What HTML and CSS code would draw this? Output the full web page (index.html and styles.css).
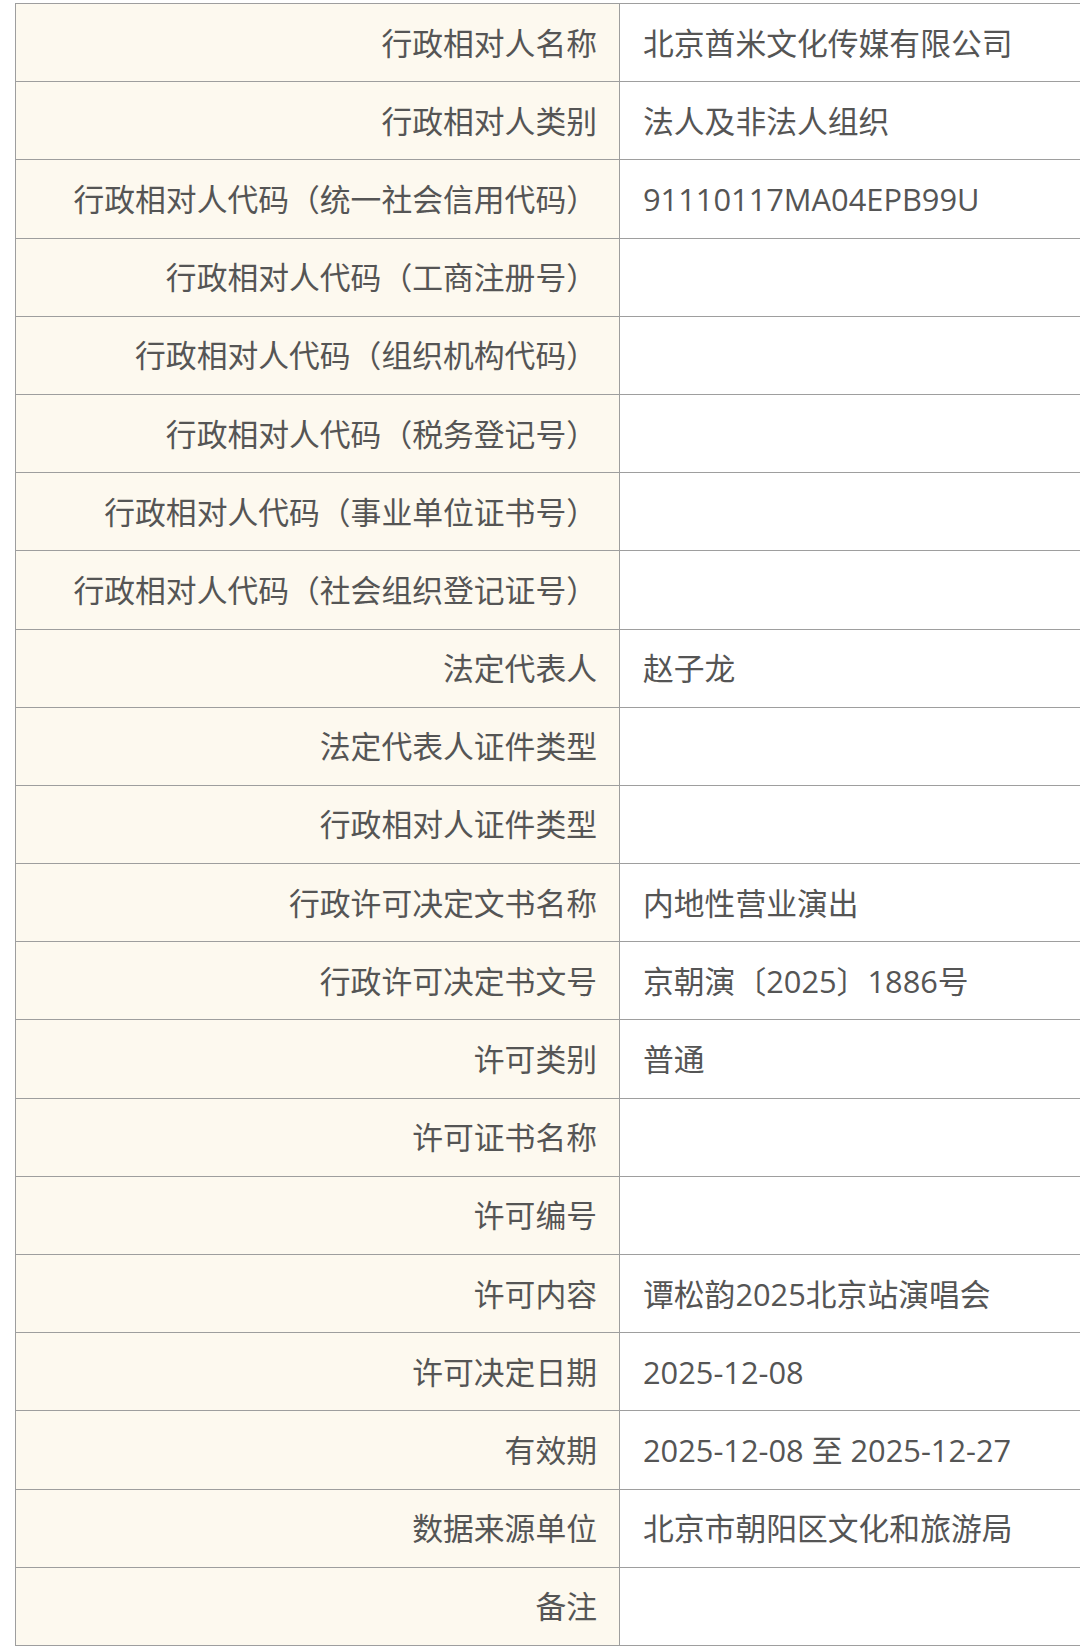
FILE: index.html
```html
<!DOCTYPE html>
<html lang="zh-CN">
<head>
<meta charset="utf-8">
<title>行政许可信息</title>
<link rel="stylesheet" href="styles.css">
</head>
<body>
<div class="wrap">
<table class="info">
<colgroup><col class="c-label"><col class="c-value"></colgroup>
<tbody>
<tr><th>行政相对人名称</th><td>北京酋米文化传媒有限公司</td></tr>
<tr><th>行政相对人类别</th><td>法人及非法人组织</td></tr>
<tr><th>行政相对人代码（统一社会信用代码）</th><td>91110117MA04EPB99U</td></tr>
<tr><th>行政相对人代码（工商注册号）</th><td></td></tr>
<tr><th>行政相对人代码（组织机构代码）</th><td></td></tr>
<tr><th>行政相对人代码（税务登记号）</th><td></td></tr>
<tr><th>行政相对人代码（事业单位证书号）</th><td></td></tr>
<tr><th>行政相对人代码（社会组织登记证号）</th><td></td></tr>
<tr><th>法定代表人</th><td>赵子龙</td></tr>
<tr><th>法定代表人证件类型</th><td></td></tr>
<tr><th>行政相对人证件类型</th><td></td></tr>
<tr><th>行政许可决定文书名称</th><td>内地性营业演出</td></tr>
<tr><th>行政许可决定书文号</th><td>京朝演〔2025〕1886号</td></tr>
<tr><th>许可类别</th><td>普通</td></tr>
<tr><th>许可证书名称</th><td></td></tr>
<tr><th>许可编号</th><td></td></tr>
<tr><th>许可内容</th><td>谭松韵2025北京站演唱会</td></tr>
<tr><th>许可决定日期</th><td>2025-12-08</td></tr>
<tr><th>有效期</th><td>2025-12-08 至 2025-12-27</td></tr>
<tr><th>数据来源单位</th><td>北京市朝阳区文化和旅游局</td></tr>
<tr><th>备注</th><td></td></tr>
</tbody>
</table>
</div>
</body>
</html>
```

FILE: styles.css
```css
html, body {
  margin: 0;
  padding: 0;
  background: #ffffff;
}
body {
  font-family: "Open Sans", "Noto Sans CJK SC", sans-serif;
  color: #555555;
  overflow: hidden;
}
.wrap {
  padding: 3px 0 0 15px;
}
.info {
  width: 1065px;
  border-collapse: collapse;
  table-layout: fixed;
  font-size: 30.8px;
}
.c-label { width: 604px; }
.info tr { height: 78.2px; }
.info th,
.info td {
  border: 1px solid #9e9e9e;
  border-right: none;
  padding: 0 22px;
  line-height: 40px;
  vertical-align: middle;
  white-space: nowrap;
}
.info th {
  background: #fdf9ef;
  font-weight: normal;
  text-align: right;
  border-right: 1px solid #9e9e9e;
}
.info td {
  background: #ffffff;
  text-align: left;
  padding-left: 23px;
}
```
